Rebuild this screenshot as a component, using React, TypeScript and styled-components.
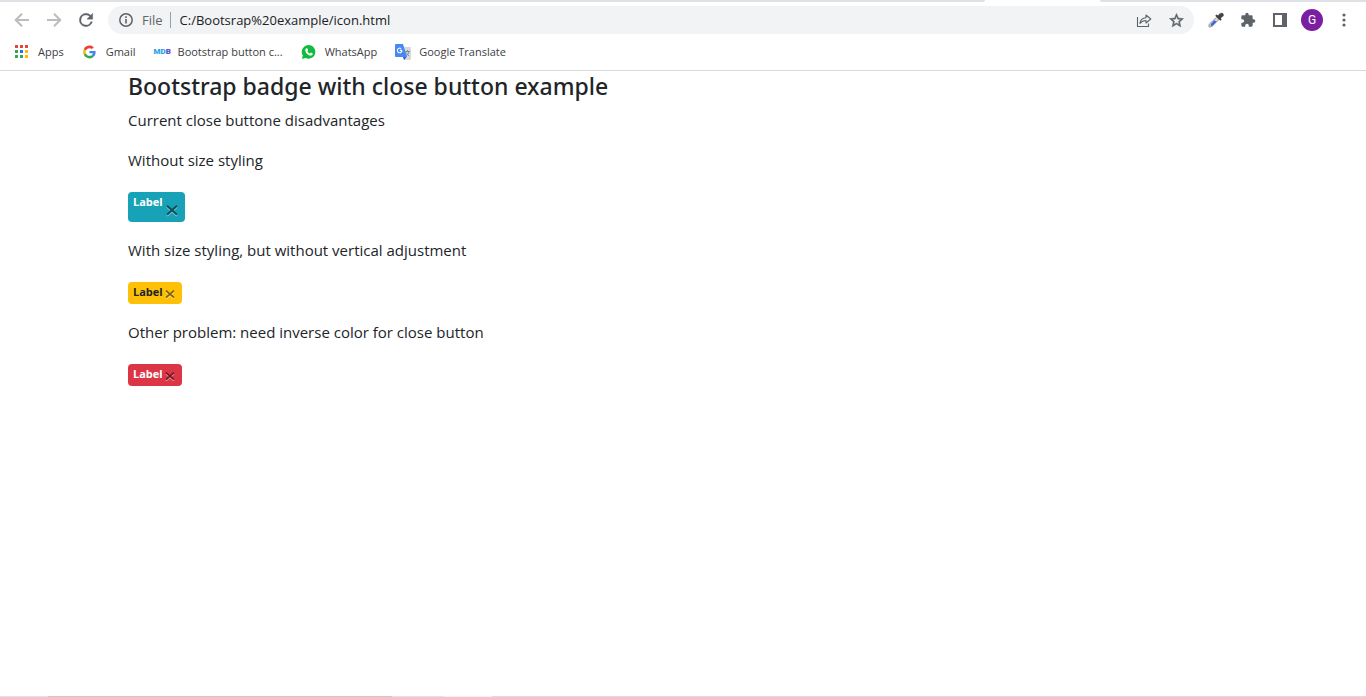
import React from "react";
import styled, { createGlobalStyle } from "styled-components";

const GlobalStyle = createGlobalStyle`
  *, *::before, *::after { box-sizing: border-box; }
  body {
    margin: 0;
    background: #fff;
    color: #212529;
    font-family: "Segoe UI", "Open Sans", "Noto Sans", sans-serif;
  }
`;

const Page = styled.div`
  min-height: 100vh;
  display: flex;
  flex-direction: column;
`;

const TabStrip = styled.div`
  height: 2px;
  display: flex;
  justify-content: space-between;
`;

const TabEdge = styled.div<{ $side: "left" | "right" }>`
  background: #dee1e6;
  flex: ${(p) => (p.$side === "left" ? "985 1 0" : "266 1 0")};
  border-radius: ${(p) => (p.$side === "left" ? "0 0 2px 0" : "0 0 0 2px")};
`;

const ActiveTab = styled.div`
  flex: 115 1 0;
`;

const Toolbar = styled.header`
  display: flex;
  align-items: center;
  height: 36px;
  padding: 0 6px;
`;

const IconButton = styled.button`
  display: flex;
  align-items: center;
  justify-content: center;
  flex: none;
  width: 32px;
  height: 28px;
  margin: 0;
  padding: 0;
  border: 0;
  background: none;
  color: #5f6368;
  cursor: pointer;
`;

const NavGroup = styled.nav`
  display: flex;
  flex: none;
`;

const AddressBar = styled.form`
  display: flex;
  align-items: center;
  flex: 1;
  height: 28px;
  margin: 0 6px;
  padding: 0 2px 0 10px;
  border-radius: 14px;
  background: #f1f3f4;
`;

const Scheme = styled.label`
  padding: 0 7px 0 8px;
  border-right: 1px solid #9aa0a6;
  color: #5f6368;
  font-size: 13px;
  line-height: 16px;
`;

const UrlInput = styled.input`
  flex: 1;
  min-width: 0;
  height: 24px;
  padding: 0 0 0 9px;
  border: 0;
  outline: 0;
  background: none;
  color: #202124;
  font-family: inherit;
  font-size: 13px;
`;

const Avatar = styled.span`
  width: 22px;
  height: 22px;
  border-radius: 50%;
  background: #7b1fa2;
  color: #fff;
  font: 12px/22px Roboto, sans-serif;
  text-align: center;
`;

const Bookmarks = styled.nav`
  display: flex;
  align-items: center;
  gap: 18px;
  height: 33px;
  padding: 0 14px 4px;
  border-bottom: 1px solid #d9dadc;
`;

const Bookmark = styled.a`
  display: flex;
  align-items: center;
  gap: 8px;
  color: #3c4043;
  font-size: 11px;
  line-height: 16px;
  text-decoration: none;
  white-space: nowrap;
`;

const Content = styled.main`
  flex: 1;
  width: 100%;
  max-width: 1140px;
  margin: 0 auto;
  padding: 1px 15px 0;
`;

const Title = styled.h4`
  margin: 0 0 7px;
  font-family: "Segoe UI", "Noto Sans", "Open Sans", sans-serif;
  font-size: 23px;
  font-weight: 500;
  line-height: 29px;
`;

const Text = styled.p`
  margin: 0 0 16px;
  font-size: 15px;
  line-height: 24px;
`;

const BadgeRow = styled.div`
  display: flex;
  padding: 4px 0 0;
  margin-bottom: 16px;
`;

const Badge = styled.span<{ $bg: string; $color: string; $large?: boolean }>`
  display: flex;
  justify-content: space-between;
  align-items: flex-end;
  width: ${(p) => (p.$large ? 57 : 54)}px;
  height: ${(p) => (p.$large ? 30 : 22)}px;
  padding: 4px 7px 4px 5px;
  border-radius: 4px;
  background: ${(p) => p.$bg};
  color: ${(p) => p.$color};
`;

const BadgeLabel = styled.span`
  align-self: flex-start;
  font-size: 11px;
  font-weight: 700;
  line-height: 12px;
`;

const CloseButton = styled.button`
  display: flex;
  padding: 0 0 1px;
  border: 0;
  background: none;
  opacity: 0.5;
  cursor: pointer;
`;

const BottomEdge = styled.footer`
  display: flex;
  height: 1px;
  background: #d3dfe4;
`;

const EdgePart = styled.div<{ $width: number; $color: string }>`
  width: ${(p) => p.$width}px;
  background: ${(p) => p.$color};
`;

const ArrowIcon = ({ flip }: { flip?: boolean }) => (
  <svg width="16" height="16" viewBox="0 0 16 16" fill="none" stroke="#babcbe" strokeWidth="2">
    <path d={flip ? "M1 8h13M8 1.700l6.300 6.300L8 14.300" : "M15 8H2M8 1.700L1.700 8L8 14.300"} />
  </svg>
);

const ReloadIcon = () => (
  <svg width="20" height="20" viewBox="0 0 24 24" fill="#5f6368" stroke="#5f6368" strokeWidth=".4">
    <path d="M17.650 6.350A7.960 7.960 0 0 0 12 4a8 8 0 1 0 7.730 10h-2.080A6 6 0 1 1 12 6c1.660 0 3.140.69 4.220 1.780L13 11h7V4z" />
  </svg>
);

const InfoIcon = () => (
  <svg width="16" height="16" viewBox="0 0 16 16" fill="none" stroke="#5f6368">
    <circle cx="8" cy="8" r="6.200" strokeWidth="1.500" />
    <path d="M8 7v4.500M8 4.300v1.700" strokeWidth="1.600" />
  </svg>
);

const ShareIcon = () => (
  <svg width="16" height="16" viewBox="0 0 16 16" fill="none" stroke="#5f6368" strokeWidth="1.100">
    <path d="M1.500 5v9.500h11V11.500" />
    <path d="M4 11.500c.3-3.700 2.300-5.500 6-5.700V3l4.800 4-4.800 4V8.500C7.500 8.500 5.500 9.500 4 11.500z" strokeLinejoin="round" />
  </svg>
);

const StarIcon = () => (
  <svg width="17" height="17" viewBox="0 0 24 24" fill="#5f6368" stroke="#5f6368" strokeWidth=".7">
    <path d="M22 9.240l-7.190-.62L12 2 9.190 8.630 2 9.240l5.460 4.730L5.820 21 12 17.270 18.180 21l-1.630-7.030L22 9.240zM12 15.400l-3.760 2.270 1-4.280-3.320-2.880 4.380-.38L12 6.100l1.710 4.040 4.380.38-3.320 2.880 1 4.280L12 15.400z" />
  </svg>
);

const DropperIcon = () => (
  <svg width="16" height="16" viewBox="0 0 16 16">
    <path d="M8.700 5.200l2.300 2.200-6.800 6.800-2.700 1-.8-.8.900-2.600z" fill="#d7dbe2" stroke="#777d86" strokeWidth=".8" />
    <path d="M6.500 8.200l2 1.600-4 3.900-1.800.4.200-2z" fill="#3c62dc" />
    <path d="M7.200 3.700l1.400-1.100 1.500.9 1.700-2.300c1.300-1.300 4.800-.3 3.700 2.900l-2.600 2 .7 1.500-1.200 1.200z" fill="#3f4143" />
    <path d="M12 2l1.300-.4" stroke="#999" />
  </svg>
);

const PuzzleIcon = () => (
  <svg width="16" height="16" viewBox="0 0 24 24" fill="#5f6368">
    <path d="M20.500 11H19V7a2 2 0 0 0-2-2h-4V3.500a2.500 2.500 0 0 0-5 0V5H4a2 2 0 0 0-2 2v3.800h1.500a2.700 2.700 0 0 1 0 5.400H2V20a2 2 0 0 0 2 2h3.800v-1.500a2.700 2.700 0 0 1 5.400 0V22H17a2 2 0 0 0 2-2v-4h1.500a2.500 2.500 0 0 0 0-5z" />
  </svg>
);

const SidePanelIcon = () => (
  <svg width="14" height="14" viewBox="0 0 14 14">
    <path d="M0 0h14v14H0zM2 2v10h7V2z" fill="#5f6368" fillRule="evenodd" />
  </svg>
);

const MenuIcon = () => (
  <svg width="4" height="14" viewBox="0 0 4 14" fill="#5f6368">
    <circle cx="2" cy="2" r="1.600" />
    <circle cx="2" cy="7" r="1.600" />
    <circle cx="2" cy="12" r="1.600" />
  </svg>
);

const AppsIcon = () => (
  <svg width="16" height="16" viewBox="-1 -1 16 16">
    <path d="M0 0h3v3H0zM5 0h3v3H5zM10 0h3v3h-3z" fill="#ea4335" />
    <path d="M0 5h3v3H0zM0 10h3v3H0zM5 10h3v3H5z" fill="#34a853" />
    <path d="M5 5h3v3H5z" fill="#1a73e8" />
    <path d="M10 5h3v3h-3zM10 10h3v3h-3z" fill="#fbbc04" />
  </svg>
);

const GoogleIcon = () => (
  <svg width="16" height="16" viewBox="-4 -6 60 60">
    <path fill="#EA4335" d="M24 9.500c3.540 0 6.710 1.220 9.210 3.600l6.850-6.850C35.900 2.380 30.470 0 24 0 14.620 0 6.510 5.380 2.560 13.220l7.980 6.190C12.430 13.720 17.740 9.500 24 9.500z" />
    <path fill="#4285F4" d="M46.980 24.550c0-1.570-.15-3.090-.38-4.550H24v9.020h12.940c-.58 2.960-2.260 5.480-4.780 7.180l7.730 6c4.510-4.180 7.090-10.360 7.090-17.650z" />
    <path fill="#FBBC05" d="M10.530 28.590c-.48-1.450-.76-2.990-.76-4.590s.27-3.140.76-4.590l-7.980-6.190C.92 16.460 0 20.120 0 24s.92 7.540 2.560 10.780l7.970-6.190z" />
    <path fill="#34A853" d="M24 48c6.480 0 11.930-2.130 15.890-5.810l-7.730-6c-2.150 1.450-4.920 2.300-8.160 2.300-6.260 0-11.570-4.220-13.470-9.910l-7.980 6.190C6.510 42.620 14.620 48 24 48z" />
  </svg>
);

const MdbMark = styled.span`
  width: 16px;
  color: #2aa3e3;
  font: 900 8px/16px Roboto, sans-serif;

  b { color: #5a4fcf; }
`;

const WhatsAppIcon = () => (
  <svg width="16" height="16" viewBox="0 0 16 16">
    <path d="M1 15l.8-3.500A6.800 6.800 0 1 1 4.600 14z" fill="#0fbc40" />
    <path d="M5.500 4.300l1 .1.700 1.700-.8 1.100c.6 1.200 1.400 1.900 2.600 2.400l.9-1 1.800.8c.3 1.300-.8 2.200-2 2.200C6.900 11.300 4.300 8.500 4.300 6.200c0-.8.500-1.600 1.200-1.900z" fill="#fff" />
  </svg>
);

const TranslateIcon = () => (
  <svg width="16" height="16" viewBox="0 0 16 16">
    <path d="M6 3h9a1 1 0 0 1 1 1v11a1 1 0 0 1-1 1H9z" fill="#d8d9dc" />
    <path d="M1 0h7l4 13H1a1 1 0 0 1-1-1V1a1 1 0 0 1 1-1z" fill="#4688f4" />
    <path d="M8 13h3.500L9 16z" fill="#3352c5" />
    <path d="M7 6.400H4.900M7 6.400A2.300 2.300 0 1 1 6.100 4.600" fill="none" stroke="#fff" strokeWidth="1.100" />
    <path d="M10 7.500h5M12.600 6v1.500M14 7.500c-.4 2-1.500 3.600-3 4.500M11.200 8.500c.6 1.400 1.700 2.700 3 3.500" fill="none" stroke="#78909c" />
  </svg>
);

const CloseIcon = ({ large }: { large?: boolean }) => {
  const w = large ? 12 : 10;
  const h = large ? 12 : 9;
  const size = large ? 10 : 8;
  const left = (w - size) / 2;
  const path = (top: number) =>
    `M${left} ${top}l${size} ${size - 1}M${left + size} ${top}l-${size} ${size - 1}`;
  return (
    <svg width={w} height={h} viewBox={`0 0 ${w} ${h}`} fill="none" strokeWidth={large ? 2 : 1.700}>
      <path d={path(1.700)} stroke="#fff" />
      <path d={path(0.700)} stroke="#000" />
    </svg>
  );
};

const bookmarks = [
  { label: "Apps", icon: <AppsIcon /> },
  { label: "Gmail", icon: <GoogleIcon /> },
  { label: "Bootstrap button c...", icon: <MdbMark>MD<b>B</b></MdbMark> },
  { label: "WhatsApp", icon: <WhatsAppIcon /> },
  { label: "Google Translate", icon: <TranslateIcon /> },
];

const examples = [
  { text: "Without size styling", bg: "#17a2b8", color: "#fff", large: true },
  { text: "With size styling, but without vertical adjustment", bg: "#ffc107", color: "#212529" },
  { text: "Other problem: need inverse color for close button", bg: "#dc3545", color: "#fff" },
];

export default function App() {
  return (
    <Page>
      <GlobalStyle />
      <TabStrip>
        <TabEdge $side="left" />
        <ActiveTab />
        <TabEdge $side="right" />
      </TabStrip>
      <Toolbar>
        <NavGroup>
          <IconButton aria-label="Back"><ArrowIcon /></IconButton>
          <IconButton aria-label="Forward"><ArrowIcon flip /></IconButton>
          <IconButton aria-label="Reload"><ReloadIcon /></IconButton>
        </NavGroup>
        <AddressBar onSubmit={(e) => e.preventDefault()}>
          <InfoIcon />
          <Scheme htmlFor="url">File</Scheme>
          <UrlInput id="url" defaultValue="C:/Bootsrap%20example/icon.html" spellCheck={false} />
          <IconButton type="button" aria-label="Share"><ShareIcon /></IconButton>
          <IconButton type="button" aria-label="Bookmark"><StarIcon /></IconButton>
        </AddressBar>
        <IconButton aria-label="Color picker"><DropperIcon /></IconButton>
        <IconButton aria-label="Extensions"><PuzzleIcon /></IconButton>
        <IconButton aria-label="Side panel"><SidePanelIcon /></IconButton>
        <IconButton aria-label="Profile"><Avatar>G</Avatar></IconButton>
        <IconButton aria-label="Menu"><MenuIcon /></IconButton>
      </Toolbar>
      <Bookmarks>
        {bookmarks.map((b) => (
          <Bookmark href="#" key={b.label}>
            {b.icon}
            {b.label}
          </Bookmark>
        ))}
      </Bookmarks>
      <Content>
        <Title>Bootstrap badge with close button example</Title>
        <Text>Current close buttone disadvantages</Text>
        {examples.map((e) => (
          <React.Fragment key={e.text}>
            <Text>{e.text}</Text>
            <BadgeRow>
              <Badge $bg={e.bg} $color={e.color} $large={e.large}>
                <BadgeLabel>Label</BadgeLabel>
                <CloseButton aria-label="Close"><CloseIcon large={e.large} /></CloseButton>
              </Badge>
            </BadgeRow>
          </React.Fragment>
        ))}
      </Content>
      <BottomEdge>
        <EdgePart $width={48} $color="#d3e6e8" />
        <EdgePart $width={344} $color="#c9c9c9" />
        <EdgePart $width={52} $color="#d3e6e8" />
        <EdgePart $width={48} $color="#eaf4f5" />
      </BottomEdge>
    </Page>
  );
}
